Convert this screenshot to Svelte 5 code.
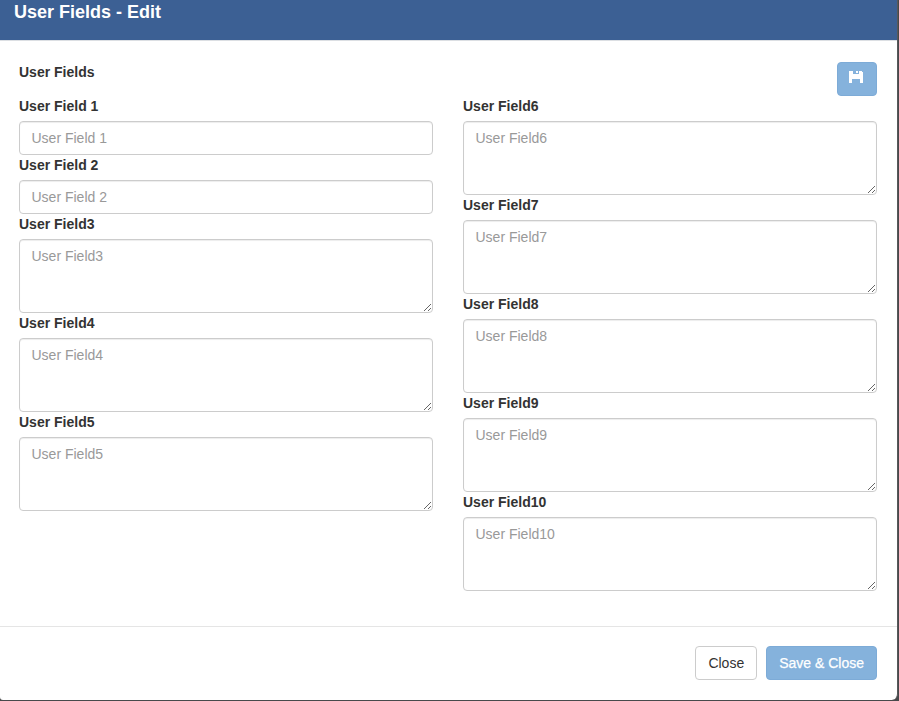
<script>
  const left = [
    { label: 'User Field 1', rows: 1 },
    { label: 'User Field 2', rows: 1 },
    { label: 'User Field3', rows: 3 },
    { label: 'User Field4', rows: 3 },
    { label: 'User Field5', rows: 3 }
  ];
  const right = [6, 7, 8, 9, 10].map((n) => ({ label: `User Field${n}`, rows: 3 }));
  const columns = [left, right];
</script>

<div class="backdrop">
  <div class="modal">
    <header><h4>User Fields - Edit</h4></header>
    <main>
      <div class="toolbar">
        <strong>User Fields</strong>
        <button class="btn primary icon" aria-label="Save">
          <svg width="14" height="12" viewBox="0 0 14 12" shape-rendering="crispEdges">
            <path fill="#fff" fill-rule="evenodd" d="M0 0h4v3h6V0h2l2 2v10h-3V8H3v4H0zM7 0h2v2H7z" />
          </svg>
        </button>
      </div>
      <div class="columns">
        {#each columns as fields}
          <div class="column">
            {#each fields as field}
              <label>
                <span>{field.label}</span>
                {#if field.rows === 1}
                  <input type="text" placeholder={field.label} />
                {:else}
                  <textarea rows={field.rows} placeholder={field.label}></textarea>
                {/if}
              </label>
            {/each}
          </div>
        {/each}
      </div>
    </main>
    <footer>
      <button class="btn">Close</button>
      <button class="btn primary">Save &amp; Close</button>
    </footer>
  </div>
</div>

<style>
  :global(body) {
    margin: 0;
    overflow: hidden;
  }
  .backdrop,
  .backdrop * {
    box-sizing: border-box;
  }
  .backdrop {
    height: 701px;
    padding-right: 1px;
    background: #48494b;
    font: 14px/20px 'Liberation Sans', Arial, sans-serif;
    color: #333;
  }
  .modal {
    display: flex;
    flex-direction: column;
    height: 700px;
    background: #fff;
    border-right: 1px solid #58595b;
    border-radius: 0 0 6px 3px;
    overflow: hidden;
  }
  header {
    height: 41px;
    padding-left: 14px;
    background: #3c6094;
    background-clip: padding-box;
    border-bottom: 1px solid #dcdfe3;
  }
  h4 {
    margin: 0;
    font-size: 18px;
    line-height: 24px;
    font-weight: bold;
    color: #fff;
  }
  main {
    flex: 1;
    padding: 21px 20px 0 19px;
  }
  .toolbar {
    display: flex;
    justify-content: space-between;
    align-items: flex-start;
    height: 34px;
  }
  .columns {
    display: flex;
    gap: 30px;
  }
  .column {
    flex: 1;
  }
  label,
  label span {
    display: block;
  }
  label span {
    font-weight: bold;
    margin-bottom: 5px;
  }
  input,
  textarea {
    display: block;
    width: 100%;
    margin: 0;
    padding: 6px 12px 6px 11.5px;
    border: 1px solid #ccc;
    border-radius: 4px;
    box-shadow: inset 0 1px 1px rgba(0, 0, 0, 0.075);
    background: #fff;
    color: #555;
    font: inherit;
    outline: none;
  }
  input {
    height: 34px;
  }
  textarea {
    height: 74px;
    overflow: auto;
    resize: vertical;
  }
  ::placeholder {
    color: #999;
    opacity: 1;
  }
  footer {
    display: flex;
    justify-content: flex-end;
    align-items: flex-start;
    gap: 9px;
    height: 74px;
    padding: 19px 20px 0;
    border-top: 1px solid #e5e5e5;
  }
  .btn {
    height: 34px;
    margin: 0;
    padding: 6px 12px;
    border: 1px solid #ccc;
    border-radius: 4px;
    background: #fff;
    color: #333;
    font: inherit;
    white-space: nowrap;
  }
  .primary {
    background: #85b2dc;
    border-color: #7dabd7;
    color: #fff;
    -webkit-text-stroke: 0.25px #fff;
  }
  .icon {
    width: 40px;
    padding: 6px 11px;
  }
  .icon svg {
    display: block;
    margin-top: -4px;
  }
</style>
